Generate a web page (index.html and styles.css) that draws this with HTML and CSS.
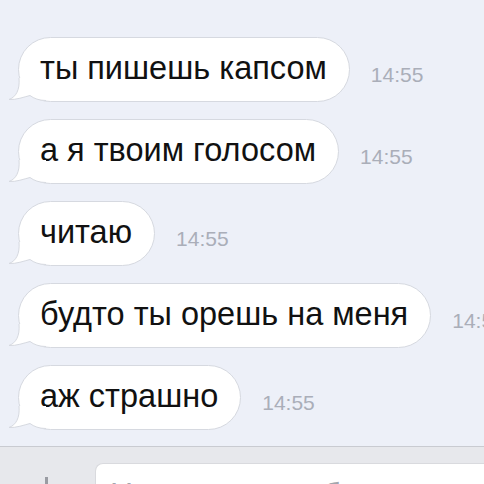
FILE: index.html
```html
<!DOCTYPE html>
<html>
	<head>
		<meta charset="utf-8">
		<title>Диалог</title>
		<link rel="stylesheet" href="styles.css">
	</head>
	<body>
		<div class="chat">
			<div class="msg">
				<div class="bubble">ты пишешь капсом
					<svg class="tail" width="40" height="32" viewBox="0 0 40 32"><path class="tail-fill" d="M13 8 C14 20 10 27 3 29.5 C10 30 18 27 24 25.5 C28 28.5 33 30.5 40 30.5 L40 8 Z"/><path class="tail-line" d="M13 8 C14 20 10 27 3 29.5 C10 30 18 27 24 25.5 C28 28.5 33 30.5 40 30.5"/></svg>
				</div>
				<span class="time">14:55</span>
			</div>
			<div class="msg">
				<div class="bubble">а я твоим голосом
					<svg class="tail" width="40" height="32" viewBox="0 0 40 32"><path class="tail-fill" d="M13 8 C14 20 10 27 3 29.5 C10 30 18 27 24 25.5 C28 28.5 33 30.5 40 30.5 L40 8 Z"/><path class="tail-line" d="M13 8 C14 20 10 27 3 29.5 C10 30 18 27 24 25.5 C28 28.5 33 30.5 40 30.5"/></svg>
				</div>
				<span class="time">14:55</span>
			</div>
			<div class="msg">
				<div class="bubble">читаю
					<svg class="tail" width="40" height="32" viewBox="0 0 40 32"><path class="tail-fill" d="M13 8 C14 20 10 27 3 29.5 C10 30 18 27 24 25.5 C28 28.5 33 30.5 40 30.5 L40 8 Z"/><path class="tail-line" d="M13 8 C14 20 10 27 3 29.5 C10 30 18 27 24 25.5 C28 28.5 33 30.5 40 30.5"/></svg>
				</div>
				<span class="time">14:55</span>
			</div>
			<div class="msg">
				<div class="bubble">будто ты орешь на меня
					<svg class="tail" width="40" height="32" viewBox="0 0 40 32"><path class="tail-fill" d="M13 8 C14 20 10 27 3 29.5 C10 30 18 27 24 25.5 C28 28.5 33 30.5 40 30.5 L40 8 Z"/><path class="tail-line" d="M13 8 C14 20 10 27 3 29.5 C10 30 18 27 24 25.5 C28 28.5 33 30.5 40 30.5"/></svg>
				</div>
				<span class="time">14:55</span>
			</div>
			<div class="msg">
				<div class="bubble">аж страшно
					<svg class="tail" width="40" height="32" viewBox="0 0 40 32"><path class="tail-fill" d="M13 8 C14 20 10 27 3 29.5 C10 30 18 27 24 25.5 C28 28.5 33 30.5 40 30.5 L40 8 Z"/><path class="tail-line" d="M13 8 C14 20 10 27 3 29.5 C10 30 18 27 24 25.5 C28 28.5 33 30.5 40 30.5"/></svg>
				</div>
				<span class="time">14:55</span>
			</div>
		</div>
		<div class="bar">
			<span class="attach"></span>
			<div class="input">Напишите сообщение...</div>
		</div>
	</body>
</html>
```
FILE: styles.css
```css
*{
	margin: 0;
	padding: 0;
	box-sizing: border-box;
}
body{
	width: 484px;
	height: 484px;
	overflow: hidden;
	background: #edf0f8;
	font-family: "Liberation Sans", Arial, sans-serif;
}
.chat{
	height: 446px;
	padding: 37px 0 0 18px;
	display: flex;
	flex-direction: column;
	gap: 17px;
}
.msg{
	display: flex;
	align-items: center;
	white-space: nowrap;
}
.bubble{
	position: relative;
	height: 65px;
	padding: 0 22px 0 21px;
	background: #fff;
	border: 1px solid #d6d9e0;
	border-radius: 33px;
	font-size: 32.5px;
	line-height: 61px;
	color: #111;
}
.tail{
	position: absolute;
	left: -13px;
	bottom: -1px;
}
.tail-fill{
	fill: #fff;
}
.tail-line{
	fill: none;
	stroke: #d6d9e0;
	stroke-width: 1;
}
.time{
	flex: none;
	margin: 10px 0 0 21px;
	font-size: 21px;
	color: #aaaeb9;
}
.bar{
	height: 38px;
	overflow: hidden;
	border-top: 1px solid #c9cbd1;
	background: #e7e8ec;
	display: flex;
	align-items: flex-start;
	padding: 16px 0 0 95px;
	position: relative;
}
.attach{
	position: absolute;
	left: 45px;
	top: 30px;
	width: 3px;
	height: 20px;
	background: #9a9ca3;
}
.input{
	flex: 1;
	height: 40px;
	background: #fff;
	border: 1px solid #d9dade;
	border-right: none;
	border-radius: 8px 0 0 8px;
	padding: 12px 0 0 14px;
	font-size: 32px;
	color: #a3a6ae;
	white-space: nowrap;
}
```
